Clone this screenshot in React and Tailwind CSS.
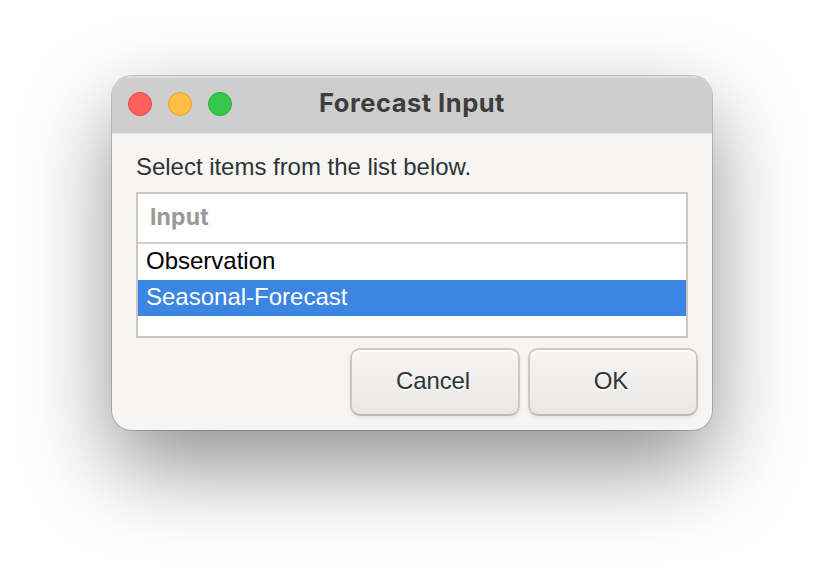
const traffic = [
  'bg-[#ff605c] border-[#e2453f]',
  'bg-[#ffbd44] border-[#e0a032]',
  'bg-[#34c84a] border-[#27ab35]',
];

function TitleBar() {
  return (
    <header className="grid h-[58px] shrink-0 grid-cols-[1fr_auto_1fr] items-center border-t-2 border-b border-t-[#dedede] border-b-[#e6e6e5] bg-[#cecece] px-4 pb-[3px]">
      <div className="flex gap-4">
        {traffic.map((color) => (
          <span key={color} className={`size-6 rounded-full border ${color}`} />
        ))}
      </div>
      <h1 className="pb-[2px] font-['Inter',sans-serif] text-[25.5px] leading-7 font-bold tracking-[0.5px] text-[#3d3d3d]">Forecast Input</h1>
    </header>
  );
}

function Button({ children }) {
  return (
    <button className="h-[68px] w-[170px] rounded-[10px] border-2 border-[#cdc7c2] border-b-[#bfb8b1] bg-linear-to-b from-[#f6f5f3] to-[#eae8e6] pr-1 pb-[2px] text-[24px] tracking-[-0.1px] text-[#2e3436] shadow-[inset_0_2px_0_#fff,0_2px_4px_rgba(0,0,0,0.07)] [text-shadow:0_2px_0_rgba(255,255,255,0.8)]">
      {children}
    </button>
  );
}

export default function App() {
  return (
    <div className="h-[578px] w-[824px] overflow-hidden bg-white pt-[76px] pl-[112px] font-['Liberation_Sans',Arial,sans-serif]">
      <main className="flex h-[354px] w-[600px] flex-col overflow-hidden rounded-[20px] bg-[#f6f5f4] shadow-[0_0_0_1px_rgba(0,0,0,0.2),0_36px_88px_rgba(0,0,0,0.44)]">
        <TitleBar />
        <p className="mt-[19px] ml-6 text-[24px] leading-7 tracking-[-0.03px] text-[#2e3436]">Select items from the list below.</p>
        <section className="mx-6 mt-[11px] h-[146px] shrink-0 border-2 border-[#cdc7c2] bg-white text-[24px] text-black">
          <div className="h-[50px] border-b-2 border-[#d5d0cc] pl-3 font-['Inter',sans-serif] text-[23px] leading-[46px] font-bold tracking-[0.15px] text-[#979a9b]">Input</div>
          <div className="h-9 pl-2 leading-[34px]">Observation</div>
          <div className="h-9 bg-[#3b86e3] pl-2 leading-[34px] text-white">Seasonal-Forecast</div>
        </section>
        <footer className="mt-[10px] mr-[14px] flex justify-end gap-2">
          <Button>Cancel</Button>
          <Button>OK</Button>
        </footer>
      </main>
    </div>
  );
}
